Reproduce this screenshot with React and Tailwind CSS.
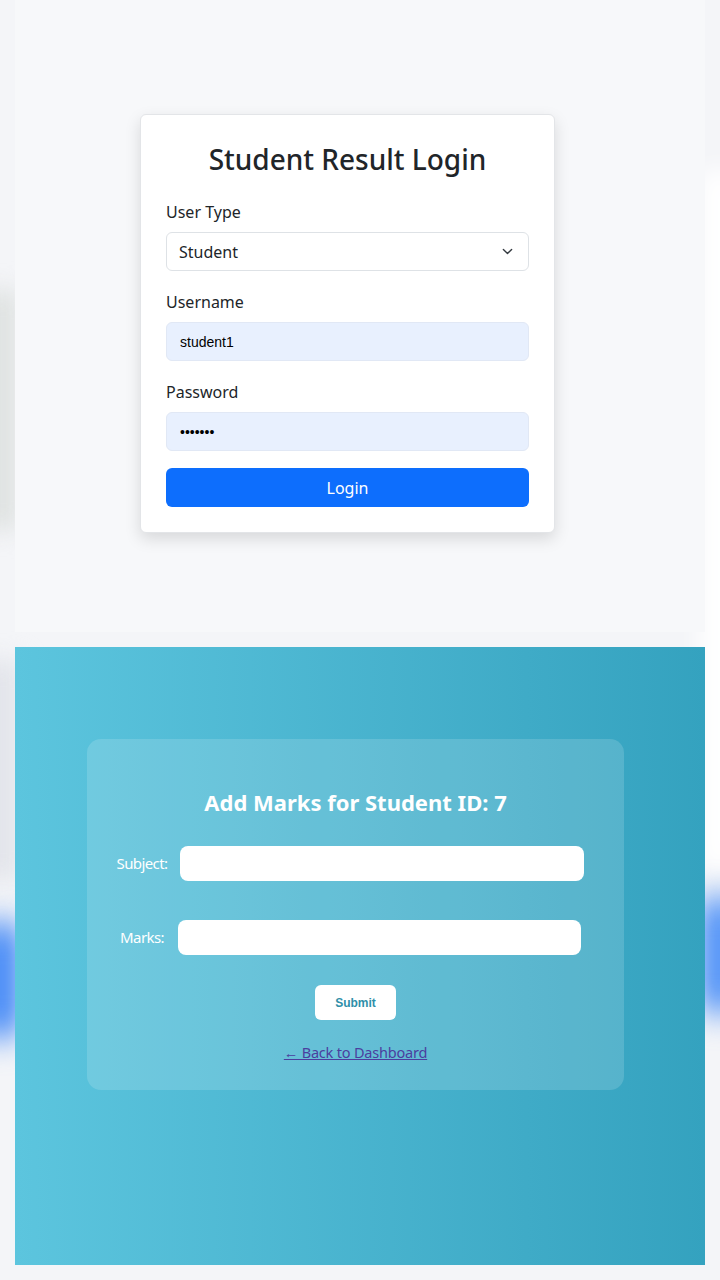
import React, { useState } from "react";

const uiFont = { fontFamily: '"Noto Sans", "Open Sans", sans-serif' };
const arial = { fontFamily: '"Liberation Sans", Arial, sans-serif' };

const LoginPanel = () => {
  const [userType, setUserType] = useState("student");

  return (
    <section className="flex h-[632px] items-start bg-[#f7f8fa] pt-[114px] pl-[125px]">
      {/* Login card */}
      <div className="w-[415px] rounded-md border border-[#e3e5e8] bg-white px-[25px] pt-[25px] pb-[25px] shadow-[0_6px_16px_rgba(0,0,0,0.13)]">
        <h2 className="mb-[23px] text-center text-[28px] font-medium leading-[38px] text-[#212529]">
          Student Result Login
        </h2>

        <label className="mb-[9px] block text-[16px] leading-[22px] text-[#212529]">User Type</label>
        <div className="relative mb-[20px]">
          <select
            value={userType}
            onChange={(e) => setUserType(e.target.value)}
            className="h-[39px] w-full appearance-none rounded-md border border-[#dee2e6] bg-white px-[12px] text-[16px] text-[#212529] outline-none"
            style={uiFont}
          >
            <option value="student">Student</option>
            <option value="admin">Admin</option>
          </select>
          <svg
            className="pointer-events-none absolute right-[15px] top-[14px] h-[11px] w-[13px]"
            viewBox="0 0 16 16"
            fill="none"
            stroke="#343a40"
            strokeWidth="2"
            strokeLinecap="round"
            strokeLinejoin="round"
          >
            <path d="m2 5 6 6 6-6" />
          </svg>
        </div>

        <label className="mb-[9px] block text-[16px] leading-[22px] text-[#212529]">Username</label>
        <input
          defaultValue="student1"
          className="mb-[20px] h-[39px] w-full rounded-md border border-[#e1e8f5] bg-[#e8f0fe] px-[13px] text-[14px] text-black outline-none"
          style={arial}
        />

        <label className="mb-[9px] block text-[16px] leading-[22px] text-[#212529]">Password</label>
        <input
          type="password"
          defaultValue="1234567"
          className="mb-[17px] h-[39px] w-full rounded-md border border-[#e1e8f5] bg-[#e8f0fe] px-[13px] text-[14px] text-black outline-none"
          style={arial}
        />

        <button className="h-[39px] w-full rounded-md bg-[#0d6efd] text-[16px] text-white">Login</button>
      </div>
    </section>
  );
};

const MarksPanel = () => {
  return (
    <section className="flex h-[618px] items-start bg-gradient-to-r from-[#5cc5de] to-[#34a2bf] pt-[92px] pl-[72px]">
      {/* Glass card */}
      <div className="flex w-[537px] flex-col items-center rounded-[14px] bg-white/15 pt-[48px] pb-[27px]">
        <h2 className="mb-[29px] text-[22px] font-bold leading-[30px] text-white">Add Marks for Student ID: 7</h2>

        <div className="mb-[39px] mr-[10px] flex items-center">
          <label className="mr-[13px] text-[15px] tracking-[-0.6px] text-white">Subject:</label>
          <input className="h-[35px] w-[404px] rounded-lg bg-white outline-none" />
        </div>

        <div className="mb-[30px] mr-[10px] flex items-center">
          <label className="mr-[14px] text-[15px] tracking-[-0.6px] text-white">Marks:</label>
          <input className="h-[35px] w-[403px] rounded-lg bg-white outline-none" />
        </div>

        <button className="mb-[21px] h-[35px] w-[81px] rounded-md bg-white text-[12px] font-bold text-[#2f8fa9]" style={arial}>
          Submit
        </button>

        <a href="#" className="text-[14.5px] leading-[22px] tracking-[-0.2px] text-[#4b3e9e] underline">
          ← Back to Dashboard
        </a>
      </div>
    </section>
  );
};

export default function App() {
  return (
    <div className="relative h-[1280px] w-[720px] overflow-hidden bg-[#f4f5f8]" style={uiFont}>
      {/* blurred backdrop peeking out at the edges */}
      <div className="absolute left-[-20px] top-[290px] h-[240px] w-[40px] bg-[#dfe2e1] blur-md" />
      <div className="absolute left-[-20px] top-[660px] h-[220px] w-[40px] bg-[#e2e4ea] blur-md" />
      <div className="absolute left-[-20px] top-[920px] h-[120px] w-[40px] rounded-full bg-[#2d7bf6] blur-lg" />
      <div className="absolute right-[-20px] top-[170px] h-[700px] w-[40px] bg-white blur-md" />
      <div className="absolute right-[-20px] top-[895px] h-[120px] w-[40px] rounded-full bg-[#3a85f7] blur-lg" />

      <div className="relative flex flex-col px-[15px]">
        <LoginPanel />
        <div className="h-[15px]" />
        <MarksPanel />
      </div>
    </div>
  );
}
